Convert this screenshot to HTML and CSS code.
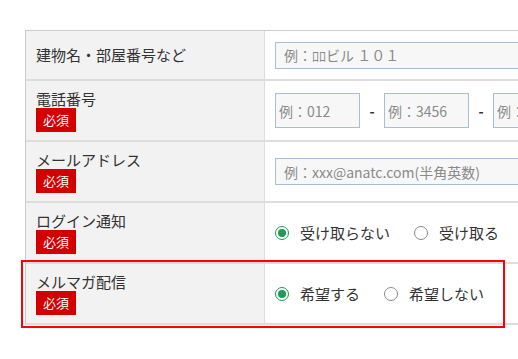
FILE: index.html
```html
<!DOCTYPE html>
<html lang="ja">
<head>
    <meta charset="UTF-8">
    <meta name="viewport" content="width=device-width, initial-scale=1.0">
    <title>会員登録</title>
    <link rel="stylesheet" href="styles.css">
</head>
<body>
    <div class="form-wrap">
        <div class="form-table">

            <!-- 建物名 -->
            <div class="row row-first">
                <div class="label label-single">建物名・部屋番号など</div>
                <div class="field">
                    <input type="text" class="text-input" placeholder="例：ﾛﾛビル １０１">
                </div>
            </div>

            <!-- 電話番号 -->
            <div class="row">
                <div class="label">
                    <span class="label-text">電話番号</span>
                    <span class="required">必須</span>
                </div>
                <div class="field">
                    <input type="text" class="tel-input" placeholder="例：012">
                    <span class="dash">-</span>
                    <input type="text" class="tel-input" placeholder="例：3456">
                    <span class="dash">-</span>
                    <input type="text" class="tel-input" placeholder="例：7890">
                </div>
            </div>

            <!-- メール -->
            <div class="row">
                <div class="label">
                    <span class="label-text">メールアドレス</span>
                    <span class="required">必須</span>
                </div>
                <div class="field">
                    <input type="text" class="text-input" placeholder="例：xxx@anatc.com(半角英数)">
                </div>
            </div>

            <!-- ログイン通知 -->
            <div class="row">
                <div class="label">
                    <span class="label-text">ログイン通知</span>
                    <span class="required">必須</span>
                </div>
                <div class="field">
                    <label class="radio"><input type="radio" name="login" checked><span class="mark"></span>受け取らない</label>
                    <label class="radio"><input type="radio" name="login"><span class="mark"></span>受け取る</label>
                </div>
            </div>

            <!-- メルマガ -->
            <div class="row">
                <div class="label">
                    <span class="label-text">メルマガ配信</span>
                    <span class="required">必須</span>
                </div>
                <div class="field">
                    <label class="radio"><input type="radio" name="mail" checked><span class="mark"></span>希望する</label>
                    <label class="radio"><input type="radio" name="mail"><span class="mark"></span>希望しない</label>
                </div>
            </div>

        </div>

        <!-- highlight around the last row -->
        <div class="highlight"></div>
    </div>
</body>
</html>
```

FILE: styles.css
```css
* {
    box-sizing: border-box;
    margin: 0;
    padding: 0;
}

html, body {
    height: 100%;
}

body {
    font-family: "Noto Sans CJK JP", "Noto Sans", sans-serif;
    color: #333;
    background-color: #fff;
    overflow: hidden;
    padding: 30px 0 0 25px;
}

.form-wrap {
    position: relative;
    width: 760px;
    padding-bottom: 40px;
}

.form-table {
    border-top: 1px solid #ccc;
    border-left: 1px solid #ccc;
}

.row {
    display: grid;
    grid-template-columns: 239px 1fr;
    height: 61px;
    border-bottom: 2px solid #ddd;
}

.row-first {
    height: 50px;
}

.label {
    background-color: #f2f2f2;
    border-right: 1px solid #ddd;
    padding: 9px 10px 0 10px;
    display: flex;
    flex-direction: column;
    align-items: flex-start;
    font-size: 15px;
}

.label-single {
    justify-content: center;
    padding-top: 0;
    padding-bottom: 2px;
}

.label-text {
    line-height: 18px;
}

.required {
    display: inline-block;
    width: 40px;
    height: 24px;
    line-height: 24px;
    text-align: center;
    background-color: #d40000;
    color: #fff;
    font-size: 13px;
}

.field {
    display: flex;
    align-items: center;
    padding-left: 10px;
    background-color: #fff;
}

input[type="text"] {
    font-family: inherit;
    font-size: 14px;
    color: #333;
    background-color: #f7f7f7;
    border: 1px solid #a6bfd8;
    outline: none;
}

input::placeholder {
    color: #8a8a8a;
}

.text-input {
    width: 460px;
    height: 27px;
    padding: 0 8px;
}

.tel-input {
    width: 85px;
    height: 35px;
    padding: 0 3px;
}

.dash {
    width: 24px;
    text-align: center;
    font-size: 14px;
    font-weight: bold;
}

.radio {
    display: flex;
    align-items: center;
    font-size: 15px;
    margin-right: 24px;
    cursor: pointer;
}

.radio input {
    display: none;
}

.mark {
    width: 14px;
    height: 14px;
    border: 1px solid #8a8a8a;
    border-radius: 50%;
    margin-right: 11px;
    position: relative;
    background-color: #fff;
}

.radio input:checked + .mark {
    border-color: #1f9a58;
}

.radio input:checked + .mark::after {
    content: "";
    position: absolute;
    left: 2px;
    top: 2px;
    width: 8px;
    height: 8px;
    border-radius: 50%;
    background-color: #1f9a58;
}

.highlight {
    position: absolute;
    left: -4px;
    top: 230px;
    width: 484px;
    height: 68px;
    border: 2px solid #f00;
    pointer-events: none;
}
```
